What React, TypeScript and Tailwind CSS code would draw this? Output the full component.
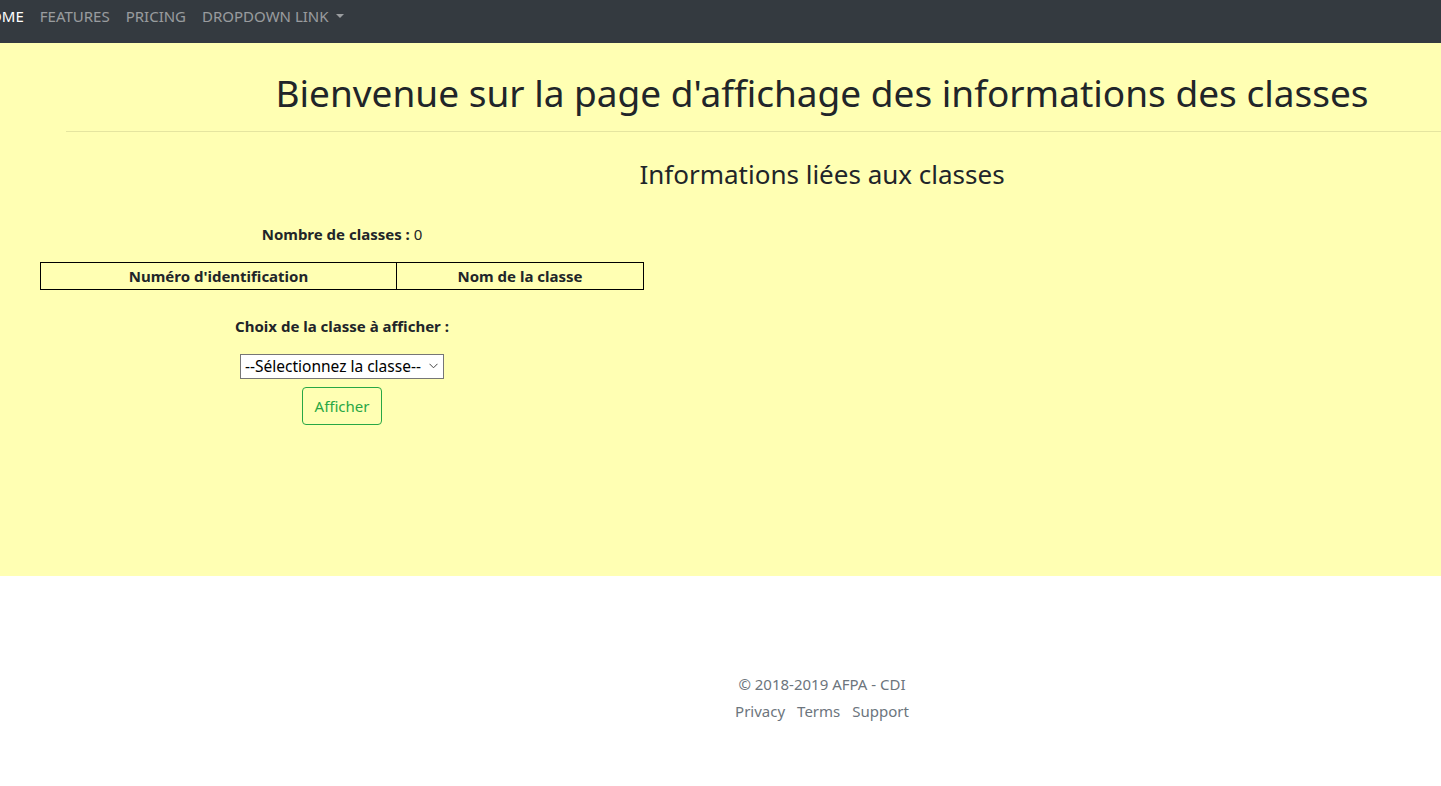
const font = { fontFamily: '"Noto Sans", "Open Sans", sans-serif' };

const NAV_LINKS = ["HOME", "FEATURES", "PRICING"];

function Navbar() {
  return (
    <nav className="h-[43px] bg-[#343a40] overflow-hidden">
      <ul className="flex pt-1 -ml-[29px]">
        {NAV_LINKS.map((label, i) => (
          <li key={label}>
            <a
              href="#"
              className={
                i === 0
                  ? "block px-2 text-[15px] leading-6 text-white"
                  : "block px-2 text-[15px] leading-6 text-white/50"
              }
            >
              {label}
            </a>
          </li>
        ))}
        <li>
          <a href="#" className="flex items-center px-2 text-[15px] leading-6 text-white/50">
            DROPDOWN LINK
            <span className="ml-[7px] inline-block h-0 w-0 border-x-[4px] border-t-[4px] border-x-transparent border-t-white/50" />
          </a>
        </li>
      </ul>
    </nav>
  );
}

function ClassInfo() {
  return (
    <div className="w-[604px] ml-[40px] text-center text-[#212529]">
      <p className="mt-[32px] text-[15px] leading-6">
        <span className="font-bold">Nombre de classes :</span> 0
      </p>
      <table className="mt-[16px] w-full border-collapse border border-black">
        <thead>
          <tr>
            <th className="w-[356px] border border-black text-[15px] font-bold leading-[26px]">
              Numéro d'identification
            </th>
            <th className="border border-black text-[15px] font-bold leading-[26px]">Nom de la classe</th>
          </tr>
        </thead>
      </table>
      <p className="mt-[24px] text-[15px] font-bold leading-6">Choix de la classe à afficher :</p>
      <div className="mt-[16px] flex flex-col items-center gap-2">
        <div className="relative">
          <select className="h-[25px] w-[204px] appearance-none border border-[#767676] bg-white pl-[4px] text-[15.5px] text-black">
            <option>--Sélectionnez la classe--</option>
          </select>
          <svg
            className="pointer-events-none absolute right-[6px] top-[9px]"
            width="9"
            height="6"
            viewBox="0 0 9 6"
            fill="none"
            stroke="#444"
            strokeWidth="1"
          >
            <path d="M0.5 0.8 L4.5 4.8 L8.5 0.8" />
          </svg>
        </div>
        <button
          type="button"
          className="h-[38px] w-[80px] rounded border border-[#28a745] text-[15px] text-[#28a745]"
        >
          Afficher
        </button>
      </div>
    </div>
  );
}

export default function App() {
  return (
    <div className="min-h-screen bg-white overflow-hidden" style={font}>
      <Navbar />
      <main className="h-[533px] bg-[#ffffb3] overflow-hidden">
        <div className="ml-[66px] w-[1512px] text-center text-[#212529]">
          <h1 className="pt-[27px] text-[37px] leading-[46px]">
            Bienvenue sur la page d'affichage des informations des classes
          </h1>
          <hr className="mt-[15px] border-t border-black/10" />
          <h3 className="mt-[26px] text-[26px] leading-[32px]">Informations liées aux classes</h3>
        </div>
        <ClassInfo />
      </main>
      <footer className="ml-[66px] w-[1512px] pt-[96px] text-center text-[15px] text-[#6c757d]">
        <p className="leading-6">© 2018-2019 AFPA - CDI</p>
        <ul className="mt-1 flex justify-center gap-3">
          <li>Privacy</li>
          <li>Terms</li>
          <li>Support</li>
        </ul>
      </footer>
    </div>
  );
}
